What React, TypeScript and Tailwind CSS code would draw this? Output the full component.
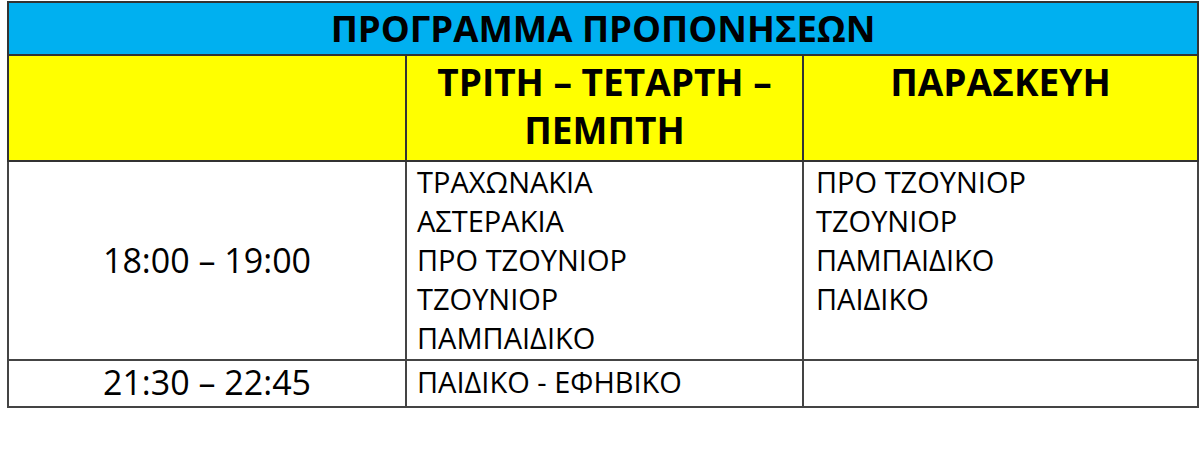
const font = { fontFamily: '"Open Sans", "Noto Sans", sans-serif' };

const weekdayGroups = ["ΤΡΑΧΩΝΑΚΙΑ", "ΑΣΤΕΡΑΚΙΑ", "ΠΡΟ ΤΖΟΥΝΙΟΡ", "ΤΖΟΥΝΙΟΡ", "ΠΑΜΠΑΙΔΙΚΟ"];
const fridayGroups = ["ΠΡΟ ΤΖΟΥΝΙΟΡ", "ΤΖΟΥΝΙΟΡ", "ΠΑΜΠΑΙΔΙΚΟ", "ΠΑΙΔΙΚΟ"];

export default function App() {
  return (
    <div className="w-[1200px] h-[450px] bg-white pl-[7px] pt-[1px]" style={font}>
      <table className="w-[1190px] table-fixed border-collapse text-black">
        <colgroup>
          <col className="w-[398px]" />
          <col className="w-[397px]" />
          <col className="w-[395px]" />
        </colgroup>
        <tbody>
          <tr className="h-[53px]">
            <td
              colSpan={3}
              className="border-2 border-[#333] bg-[#00b0f0] text-center align-middle text-[36.5px] font-bold leading-none"
            >
              ΠΡΟΓΡΑΜΜΑ ΠΡΟΠΟΝΗΣΕΩΝ
            </td>
          </tr>
          <tr className="h-[106px]">
            <td className="border-2 border-[#333] bg-[#ffff00]" />
            <td className="border-2 border-[#333] bg-[#ffff00] pt-[2px] text-center align-top text-[37px] font-bold leading-[48px]">
              ΤΡΙΤΗ – ΤΕΤΑΡΤΗ –<br />ΠΕΜΠΤΗ
            </td>
            <td className="border-2 border-[#333] bg-[#ffff00] pt-[2px] text-center align-top text-[37px] font-bold leading-[48px]">
              ΠΑΡΑΣΚΕΥΗ
            </td>
          </tr>
          <tr className="h-[199px]">
            <td className="border-2 border-[#444] text-center align-middle text-[34px]">
              18:00 – 19:00
            </td>
            <td className="border-2 border-[#444] pl-[10px] align-top text-[29px] leading-[39px]">
              {weekdayGroups.map((g) => (
                <div key={g}>{g}</div>
              ))}
            </td>
            <td className="border-2 border-[#444] pl-[12px] align-top text-[29px] leading-[39px]">
              {fridayGroups.map((g) => (
                <div key={g}>{g}</div>
              ))}
            </td>
          </tr>
          <tr className="h-[47px]">
            <td className="border-2 border-[#444] pb-[3px] text-center align-middle text-[34px] leading-none">
              21:30 – 22:45
            </td>
            <td className="border-2 border-[#444] pb-[4px] pl-[10px] align-middle text-[29px] leading-none">
              ΠΑΙΔΙΚΟ - ΕΦΗΒΙΚΟ
            </td>
            <td className="border-2 border-[#444]" />
          </tr>
        </tbody>
      </table>
    </div>
  );
}
